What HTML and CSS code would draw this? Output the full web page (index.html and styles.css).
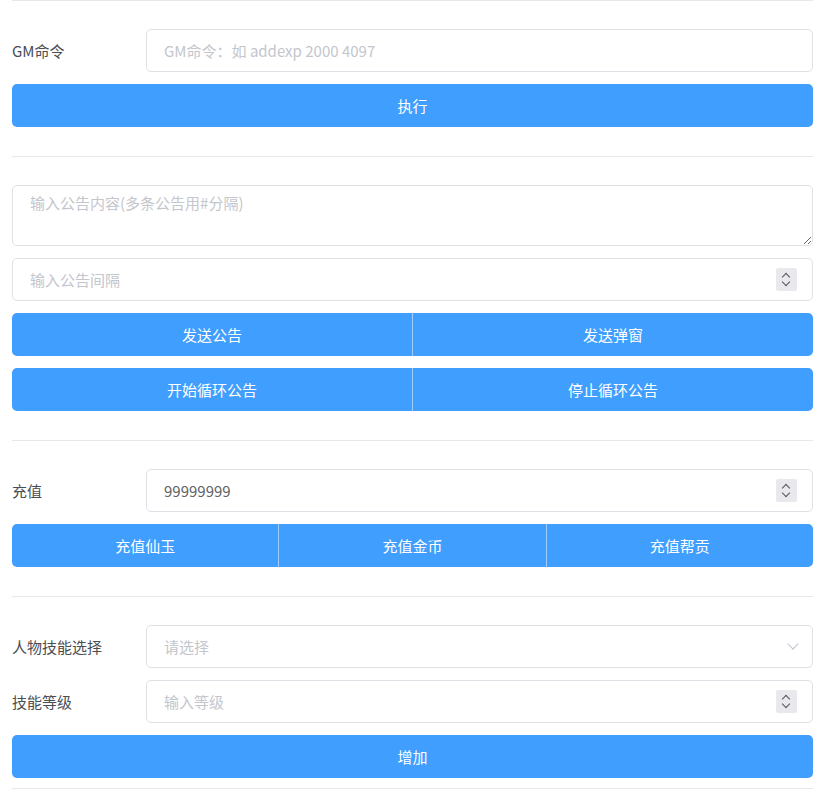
FILE: index.html
```html
<!DOCTYPE html>
<html lang="zh-CN">
<head>
    <meta charset="UTF-8">
    <meta name="viewport" content="width=device-width, initial-scale=1.0">
    <title>GM 工具</title>
    <link rel="stylesheet" href="styles.css">
</head>
<body>
    <div class="panel">
        <div class="divider"></div>

        <div class="section">
            <div class="form-row">
                <label class="form-label">GM命令</label>
                <div class="field">
                    <input type="text" class="text-input" placeholder="GM命令：如 addexp 2000 4097">
                </div>
            </div>
            <button class="btn">执行</button>
        </div>

        <div class="divider"></div>

        <div class="section">
            <textarea class="text-area" placeholder="输入公告内容(多条公告用#分隔)"></textarea>
            <div class="field">
                <input type="text" class="text-input" placeholder="输入公告间隔">
                <span class="spinner"><i class="up"></i><i class="down"></i></span>
            </div>
            <div class="btn-group">
                <button class="btn">发送公告</button>
                <button class="btn">发送弹窗</button>
            </div>
            <div class="btn-group">
                <button class="btn">开始循环公告</button>
                <button class="btn">停止循环公告</button>
            </div>
        </div>

        <div class="divider"></div>

        <div class="section">
            <div class="form-row">
                <label class="form-label">充值</label>
                <div class="field">
                    <input type="text" class="text-input" value="99999999">
                    <span class="spinner"><i class="up"></i><i class="down"></i></span>
                </div>
            </div>
            <div class="btn-group">
                <button class="btn">充值仙玉</button>
                <button class="btn">充值金币</button>
                <button class="btn">充值帮贡</button>
            </div>
        </div>

        <div class="divider"></div>

        <div class="section">
            <div class="form-row">
                <label class="form-label">人物技能选择</label>
                <div class="field">
                    <input type="text" class="text-input" placeholder="请选择" readonly>
                    <span class="select-arrow"></span>
                </div>
            </div>
            <div class="form-row">
                <label class="form-label">技能等级</label>
                <div class="field">
                    <input type="text" class="text-input" placeholder="输入等级">
                    <span class="spinner"><i class="up"></i><i class="down"></i></span>
                </div>
            </div>
            <button class="btn">增加</button>
        </div>

        <div class="divider bottom"></div>
    </div>
</body>
</html>
```

FILE: styles.css
```css
* {
    box-sizing: border-box;
    margin: 0;
    padding: 0;
}

body {
    font-family: "Noto Sans CJK SC", "Liberation Sans", sans-serif;
    background-color: #fff;
    color: #606266;
    font-size: 15px;
    padding: 0 11px 0 12px;
}

.divider {
    border-top: 1px solid #e6e8eb;
}

.divider.bottom {
    margin-top: -19px;
}

.section {
    display: flex;
    flex-direction: column;
    gap: 12px;
    padding: 28px 0 29px;
}

.form-row {
    display: flex;
    align-items: center;
}

.form-label {
    width: 134px;
    flex-shrink: 0;
    color: #4a4d52;
    font-size: 15px;
}

.field {
    position: relative;
    flex: 1;
}

.text-input,
.text-area {
    display: block;
    width: 100%;
    font-family: inherit;
    font-size: 15px;
    color: #606266;
    border: 1px solid #dfe1e6;
    border-radius: 5px;
    background-color: #fff;
    outline: none;
}

.text-input {
    height: 43px;
    padding: 0 17px;
}

.text-area {
    height: 61px;
    padding: 6px 17px;
    line-height: 1.5;
    resize: vertical;
}

.text-input::placeholder,
.text-area::placeholder {
    color: #c3c6cc;
}

.spinner {
    position: absolute;
    right: 16px;
    top: 10px;
    width: 21px;
    height: 23px;
    background-color: #e9e9ed;
    border-radius: 2px;
}

.spinner i {
    position: absolute;
    left: 7px;
    width: 6px;
    height: 6px;
    border-left: 1.5px solid #555;
    border-top: 1.5px solid #555;
}

.spinner .up {
    top: 6px;
    transform: rotate(45deg);
}

.spinner .down {
    top: 11px;
    transform: rotate(-135deg);
}

.select-arrow {
    position: absolute;
    right: 16px;
    top: 15px;
    width: 8px;
    height: 8px;
    border-right: 1.5px solid #c0c4cc;
    border-bottom: 1.5px solid #c0c4cc;
    transform: rotate(45deg);
}

.btn {
    display: block;
    height: 43px;
    width: 100%;
    border: none;
    border-radius: 5px;
    background-color: #409eff;
    color: #fff;
    font-family: inherit;
    font-size: 15px;
    cursor: pointer;
}

.btn-group {
    display: flex;
}

.btn-group .btn {
    flex: 1;
    border-radius: 0;
    border-left: 1px solid rgba(255, 255, 255, 0.5);
}

.btn-group .btn:first-child {
    border-left: none;
    border-radius: 5px 0 0 5px;
}

.btn-group .btn:last-child {
    border-radius: 0 5px 5px 0;
}
```
